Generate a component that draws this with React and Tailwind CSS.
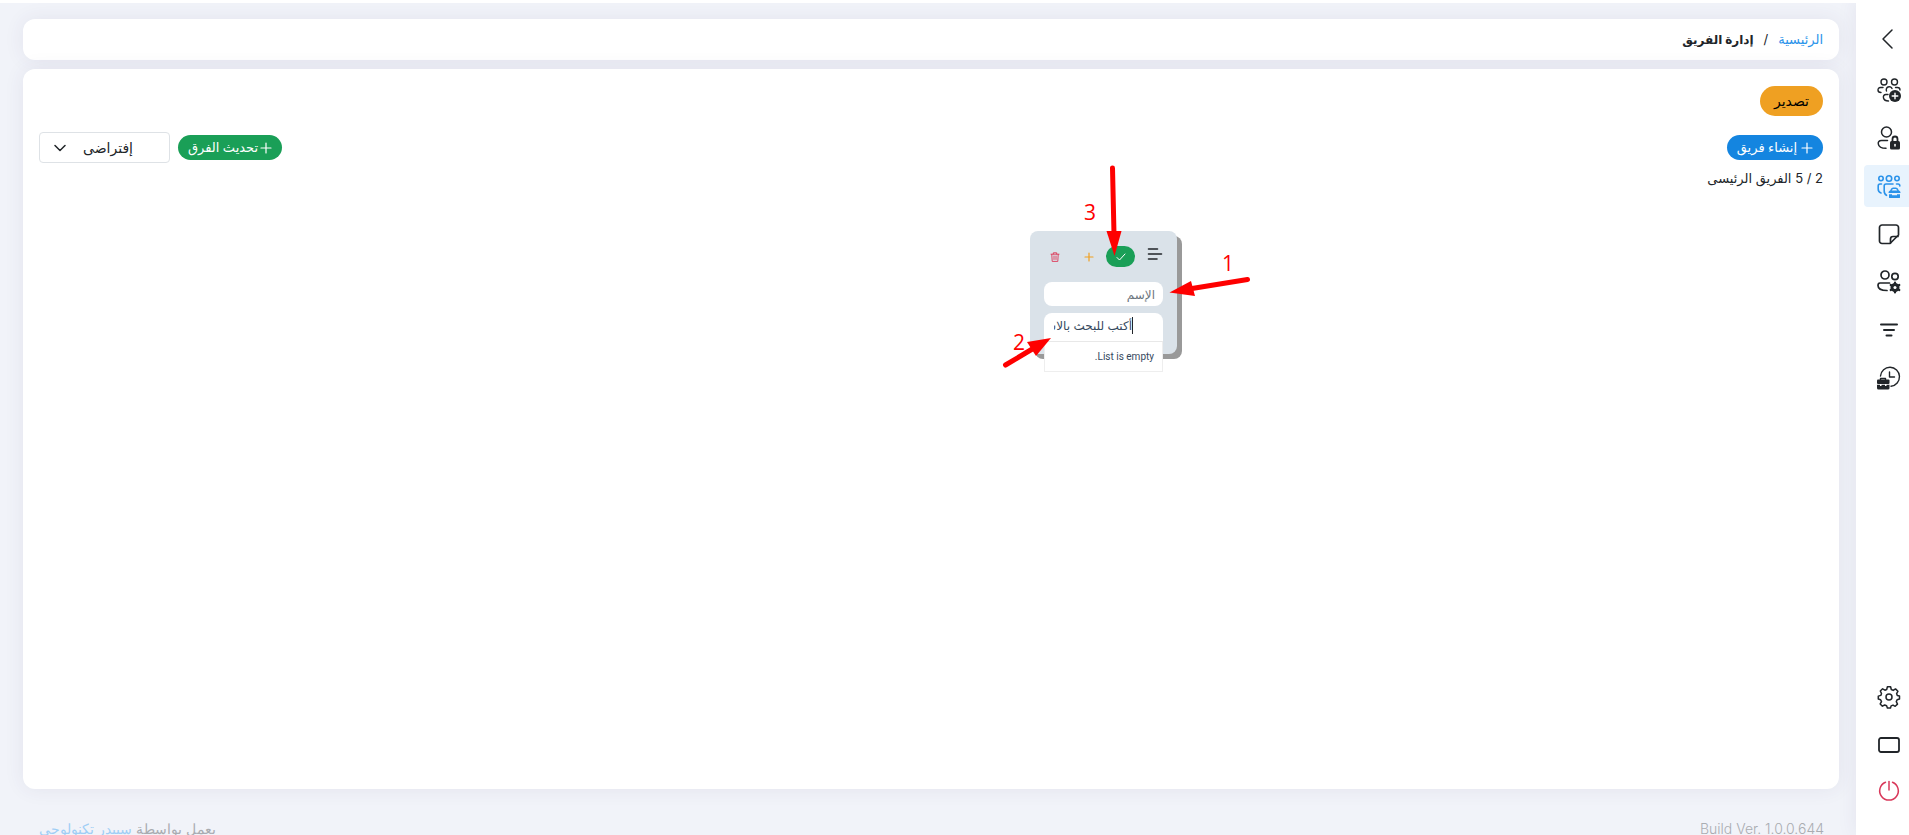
import { useState } from 'react'
import clsx from 'clsx'

const strokeProps = {
  fill: 'none',
  stroke: 'currentColor',
  strokeWidth: 1.5,
  strokeLinecap: 'round',
  strokeLinejoin: 'round',
}

function BackIcon() {
  return (
    <svg width="24" height="24" viewBox="0 0 24 24" {...strokeProps}>
      <path d="M15 3 6 12l9 9" />
    </svg>
  )
}

function AddTeamIcon() {
  return (
    <svg width="24" height="24" viewBox="0 0 24 24" {...strokeProps} strokeWidth="1.4">
      <circle cx="7" cy="4" r="3" />
      <circle cx="17.5" cy="4" r="3" />
      <path d="M6 9.5H3.5C1.5 9.5 1 11 1 12c0 1.500 1 2.500 3 2.500" />
      <path d="M18.500 9.500H20.500C22.500 9.500 23 10.500 23 12" />
      <path d="M9.500 13a3 3 0 1 1 5.500-2.500" />
      <path d="M11 16.500H9C7 16.500 6 18 6.500 20s2.500 3 5 3" />
      <circle cx="18" cy="18" r="6" fill="currentColor" stroke="none" />
      <path d="M18 15.200v5.600M15.200 18h5.600" stroke="#fff" />
    </svg>
  )
}

function UserLockIcon() {
  return (
    <svg width="24" height="24" viewBox="0 0 24 24" {...strokeProps}>
      <circle cx="9.500" cy="6" r="5" />
      <path d="M10.500 14.500H4.500C2 14.500 1 16 1.300 18c.4 2.600 3.500 4.300 7.700 4.300" />
      <rect x="13" y="15" width="10" height="8.500" rx="1.500" fill="currentColor" stroke="none" />
      <path d="M15.500 15v-2a2.500 2.500 0 0 1 5 0v2" strokeWidth="1.800" />
      <path d="M18 18.500v1.500" stroke="#fff" />
    </svg>
  )
}

function TeamWorkIcon() {
  return (
    <svg width="24" height="24" viewBox="0 0 24 24" {...strokeProps} strokeWidth="1.600">
      <circle cx="4" cy="4.500" r="2.200" />
      <circle cx="12" cy="4.500" r="2.700" />
      <circle cx="20" cy="4.500" r="2.200" />
      <path d="M4.500 10H3c-1.300 0-1.800.8-1.800 2v3c0 2 1 3.500 2.800 4" />
      <path d="M19.500 10H21c1.300 0 1.800.8 1.800 2" />
      <path d="M16 10H9c-1.300 0-1.800.8-1.800 2v5c0 2 .8 3.500 2.300 4.300" />
      <path d="M14 16.500c.5-1.500 1.200-2.300 2-2.300h3c.8 0 1.500.8 2 2.300" />
      <path d="M11.500 19c0-1.500.7-2.500 2-2.500h8c1.300 0 2 1 2 2.500z" fill="currentColor" stroke="none" />
      <path d="M12 20.200h3v1h5v-1h3v3a1 1 0 0 1-1 1h-9a1 1 0 0 1-1-1z" fill="currentColor" stroke="none" />
    </svg>
  )
}

function NoteIcon() {
  return (
    <svg width="24" height="24" viewBox="0 0 24 24" {...strokeProps} strokeWidth="1.700">
      <path d="M13 21.500H5A2.500 2.500 0 0 1 2.500 19V5.500A2.500 2.500 0 0 1 5 3h14a2.500 2.500 0 0 1 2.500 2.500V13L13 21.500z" />
      <path d="M13.500 21v-4a2.500 2.500 0 0 1 2.500-2.500h5" />
    </svg>
  )
}

function UsersGearIcon() {
  return (
    <svg width="24" height="24" viewBox="0 0 24 24" {...strokeProps} strokeWidth="1.700">
      <circle cx="8" cy="5" r="4" />
      <circle cx="18" cy="6.500" r="3.200" />
      <path d="M12.500 13H3C1.500 13 1 14 1 15.500 1 18.500 4 20.500 10 20.500" />
      <circle cx="18" cy="17.500" r="3" strokeWidth="3" />
      <path d="M18 12.500v10M13.700 15l8.600 5M22.300 15l-8.600 5" strokeWidth="2.200" />
      <circle cx="18" cy="17.500" r="1.500" fill="#fff" stroke="none" />
    </svg>
  )
}

function FilterIcon() {
  return (
    <svg width="24" height="24" viewBox="0 0 24 24" {...strokeProps} strokeWidth="2">
      <path d="M4 6.500h16M7 12h10M9.500 17.500h5" />
    </svg>
  )
}

function ClockBagIcon() {
  return (
    <svg width="24" height="24" viewBox="0 0 24 24" {...strokeProps} strokeWidth="1.400">
      <path d="M3.500 10A9.500 9.500 0 1 1 14 20.200" />
      <path d="M12.500 6v5h5" />
      <path d="M3.500 14v-1.500h5V14" />
      <rect x="0" y="13.500" width="12.500" height="4.500" rx="1" fill="currentColor" stroke="none" />
      <path d="M0 18.800h3v1.200h1.500v-1.200H8v1.200h1.500v-1.200h3V22a1.500 1.500 0 0 1-1.500 1.500H1.500A1.500 1.500 0 0 1 0 22z" fill="currentColor" stroke="none" />
    </svg>
  )
}

function GearIcon() {
  return (
    <svg width="24" height="24" viewBox="0 0 24 24" {...strokeProps}>
      <circle cx="12" cy="12" r="3" />
      <path d="M10.400 1.800h3.200l.7 2.700 1.900.9 2.300-1.500 2.400 2.400-1.300 2.300.7 1.900 2.200.5v3l-2.400.8-.8 1.800 1.200 2.500-2.300 2.200-2.200-1.200-1.900.8-.6 2.200h-3.100l-.8-2.400-1.900-.7-2.300 1.200-2.200-2.300 1.300-2.300-.9-1.900-2.300-.6v-3l2.500-.7.7-1.900L3.300 6l2.300-2.200L7.900 5.200l1.800-.7z" />
    </svg>
  )
}

function ScreenIcon() {
  return (
    <svg width="24" height="24" viewBox="0 0 24 24" {...strokeProps} strokeWidth="1.800">
      <rect x="2" y="6" width="20" height="14" rx="2" />
    </svg>
  )
}

function PowerIcon() {
  return (
    <svg width="24" height="24" viewBox="0 0 24 24" {...strokeProps}>
      <path d="M8.500 3.200a9.300 9.300 0 1 0 7 0" />
      <path d="M12 2.500v8.500" />
    </svg>
  )
}

const navItems = [
  { label: 'إضافة فريق', Icon: AddTeamIcon },
  { label: 'الصلاحيات', Icon: UserLockIcon },
  { label: 'إدارة الفريق', Icon: TeamWorkIcon, active: true },
  { label: 'الملاحظات', Icon: NoteIcon },
  { label: 'إعدادات المستخدمين', Icon: UsersGearIcon },
  { label: 'تصفية', Icon: FilterIcon },
  { label: 'أوقات العمل', Icon: ClockBagIcon },
]

const bottomItems = [
  { label: 'الإعدادات', Icon: GearIcon },
  { label: 'الشاشة', Icon: ScreenIcon },
  { label: 'خروج', Icon: PowerIcon, danger: true },
]

function NavLink({ item }) {
  const { Icon, label, active, danger } = item
  return (
    <a
      href="#"
      aria-label={label}
      className={clsx(
        'flex h-[42px] items-center justify-end rounded-e pe-[13px]',
        active ? 'bg-[#e8f3fd] text-[#2b93ea]' : danger ? 'text-[#d9385a]' : 'text-[#212529]'
      )}
    >
      <Icon />
    </a>
  )
}

function Sidebar() {
  return (
    <nav className="flex w-[53px] shrink-0 flex-col bg-white pe-2 pt-[18px] pb-[23px] shadow-[0_0_20px_rgba(60,50,100,0.08)]">
      <button type="button" aria-label="رجوع" className="mb-[9px] flex h-[42px] items-center justify-end pe-[13px] text-[#212529]">
        <BackIcon />
      </button>
      <div className="flex flex-col gap-1.5">
        {navItems.map((item) => <NavLink key={item.label} item={item} />)}
      </div>
      <div className="mt-auto flex flex-col gap-[5px]">
        {bottomItems.map((item) => <NavLink key={item.label} item={item} />)}
      </div>
    </nav>
  )
}

function Steps() {
  return (
    <svg
      width="260"
      height="215"
      viewBox="0 0 260 215"
      className="pointer-events-none absolute -top-[71px] -left-[30px]"
      fill="#fe0000"
      stroke="none"
    >
      <g stroke="#fe0000" strokeWidth="5" strokeLinecap="round">
        <path d="M112.500 8 114 74" />
        <path d="M247.500 119.500 192 128.500" />
        <path d="M5.500 205 34 188" />
      </g>
      <path d="M106.500 71h15l-7 25z" />
      <path d="M169.500 132.500 191 121l4 15z" />
      <path d="M51 178 27 182l9 14z" />
      <g fontFamily="'Open Sans', sans-serif" fontSize="21" textAnchor="middle">
        <text x="90" y="60">3</text>
        <text x="228" y="111">1</text>
        <text x="19" y="190">2</text>
      </g>
    </svg>
  )
}

function TeamNode() {
  const [name, setName] = useState('')
  const [query, setQuery] = useState('')

  return (
    <div className="absolute top-[41px] left-[991px] h-[123px] w-[147px] rounded-lg bg-[#dae2e9] px-3.5 shadow-[5px_5px_0_#999]" dir="rtl">
      <div className="flex h-[51px] items-center">
        <button type="button" aria-label="القائمة" className="pb-1.5 text-[#212529]">
          <svg width="16" height="14" viewBox="0 0 16 14" {...strokeProps} strokeWidth="1.600">
            <path d="M1.500 2h9M1.500 7h13M1.500 12h8.500" />
          </svg>
        </button>
        <button type="button" aria-label="حفظ" className="ms-3 flex h-[21px] w-[29px] items-center justify-center rounded-full bg-[#1a9f57] text-white">
          <svg width="10" height="8" viewBox="0 0 10 8" {...strokeProps} strokeWidth="1">
            <path d="M1 4.500 3.500 7 9 1" />
          </svg>
        </button>
        <button type="button" aria-label="إضافة" className="ms-3 text-[#f0a020]">
          <svg width="10" height="10" viewBox="0 0 10 10" {...strokeProps} strokeWidth="1.200">
            <path d="M5 1v8M1 5h8" />
          </svg>
        </button>
        <button type="button" aria-label="حذف" className="ms-auto px-1.5 text-[#dc3555]">
          <svg width="10" height="10" viewBox="0 0 10 10" {...strokeProps} strokeWidth="0.900">
            <path d="M1 2.200h8M3.300 2V.8h3.400V2M1.800 2.500 2.200 9.400h5.600L8.200 2.500M4 4v3.500M6 4v3.500" />
          </svg>
        </button>
      </div>
      <input
        aria-label="الإسم"
        placeholder="الإسم"
        value={name}
        onChange={(e) => setName(e.target.value)}
        className="block h-6 w-full rounded-lg bg-white px-2 text-xs outline-none placeholder:text-[#6c757d]"
      />
      <div className="relative mt-[7px]">
        <input
          aria-label="أكتب للبحث"
          placeholder="أكتب للبحث بالاسم"
          value={query}
          onChange={(e) => setQuery(e.target.value)}
          className="block h-7 w-full rounded-t-lg bg-white ps-[31px] pe-2.5 pb-1 text-xs outline-none placeholder:text-[#35495e]"
        />
        <span className="absolute top-1 right-[30px] h-[17px] w-px bg-[#212529]" />
        <div className="absolute inset-x-0 top-full flex h-[31px] items-center border border-t-[#e8e8e8] border-[#eeeeee] bg-white px-2 font-['Roboto',sans-serif] text-[10px] text-[#35495e]">
          List is empty.
        </div>
      </div>
      <Steps />
    </div>
  )
}

function Breadcrumb() {
  return (
    <div className="flex h-[41px] shrink-0 items-center gap-2.5 rounded-xl bg-white px-4 text-[13px] shadow-[0_0_20px_rgba(60,50,100,0.08)]">
      <a href="#" className="text-[#2b93ea]">الرئيسية</a>
      <span>/</span>
      <span className="text-xs font-bold">إدارة الفريق</span>
    </div>
  )
}

export default function App() {
  const [view, setView] = useState('default')

  return (
    <div
      dir="rtl"
      className="flex h-screen overflow-hidden bg-[#f1f3f9] font-['Inter','DejaVu_Sans',sans-serif] text-[#212529]"
    >
      <Sidebar />
      <div className="flex min-w-0 flex-1 flex-col border-t-[3px] border-white">
        <div className="flex flex-col gap-[9px] ps-[17px] pe-[23px] pt-4">
          <Breadcrumb />
          <main className="flex min-h-[calc(100vh-115px)] shrink-0 flex-col rounded-xl bg-white px-4 pt-[17px] pb-4 shadow-[0_0_20px_rgba(60,50,100,0.08)]">
            <div className="flex">
              <button type="button" className="h-[30px] rounded-full bg-[#efa022] px-3.5 text-sm text-black">
                تصدير
              </button>
            </div>
            <div className="mt-4 flex items-center justify-between">
              <button type="button" className="flex h-[25px] items-center gap-1 rounded-full bg-[#1485e0] px-2.5 text-[13px] font-medium text-white">
                <svg width="12" height="12" viewBox="0 0 12 12" {...strokeProps} strokeWidth="1.200">
                  <path d="M6 1v10M1 6h10" />
                </svg>
                إنشاء فريق
              </button>
              <div className="flex items-center gap-2">
                <button type="button" className="flex h-[25px] items-center gap-0.5 rounded-full bg-[#1a9f57] px-2.5 text-[13px] font-medium text-white">
                  <svg width="12" height="12" viewBox="0 0 12 12" {...strokeProps} strokeWidth="1.200">
                    <path d="M6 1v10M1 6h10" />
                  </svg>
                  تحديث الفرق
                </button>
                <div className="relative">
                  <select
                    aria-label="طريقة العرض"
                    value={view}
                    onChange={(e) => setView(e.target.value)}
                    className="block h-[31px] w-[131px] appearance-none rounded border border-[#dee2e6] bg-white ps-9 text-sm"
                  >
                    <option value="default">إفتراضى</option>
                  </select>
                  <svg width="12" height="12" viewBox="0 0 12 12" {...strokeProps} className="pointer-events-none absolute top-2.5 left-[15px]">
                    <path d="m1 3.500 5 5 5-5" />
                  </svg>
                </div>
              </div>
            </div>
            <p className="mt-[3px] text-[13px] leading-6">2 / 5 الفريق الرئيسى</p>
            <div className="relative flex-1" dir="ltr">
              <TeamNode />
            </div>
          </main>
        </div>
        <footer className="mt-[30px] flex shrink-0 items-center justify-between ps-8 pe-[39px] text-sm font-light text-[#a9acb1]">
          <span dir="ltr">Build Ver. 1.0.0.644</span>
          <span>
            يعمل بواسطة <a href="#" className="text-[#9fcef5]">سبيدر تكنولوجى</a>
          </span>
        </footer>
      </div>
    </div>
  )
}
